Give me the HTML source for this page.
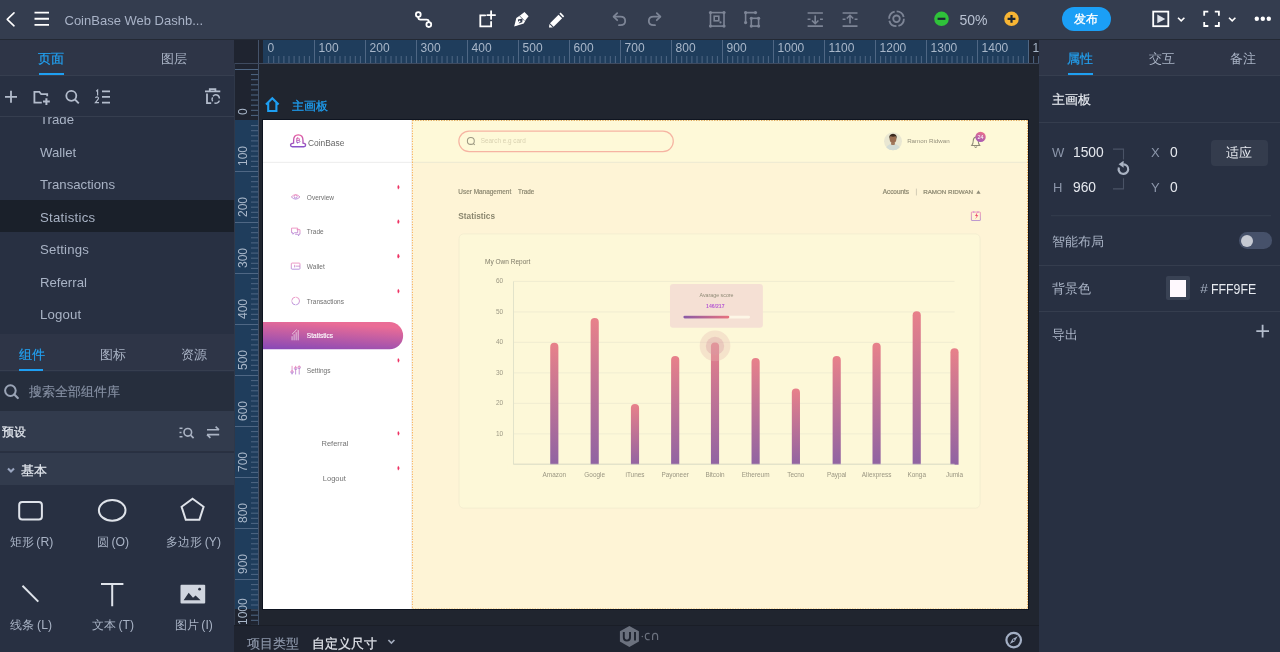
<!DOCTYPE html>
<html><head><meta charset="utf-8">
<style>
*{box-sizing:border-box;margin:0;padding:0}
html,body{width:1280px;height:652px;overflow:hidden;background:#20252f;font-family:"Liberation Sans",sans-serif}
.a{position:absolute}
.t{position:absolute;white-space:nowrap;line-height:1}
svg{position:absolute;overflow:visible}
/* top bar */
#top{left:0;top:0;width:1280px;height:40px;background:#343d4f;border-bottom:1px solid #232934;z-index:2}
/* left panel */
#left{left:0;top:39px;width:234px;height:613px;background:#283042}
#right{left:1039px;top:39px;width:241px;height:613px;background:#283042}
#canvas{left:234px;top:39px;width:805px;height:587px;background:#20252f}
#bottom{left:234px;top:625px;width:805px;height:27px;background:#1f2430;border-top:1px solid #1a1e27}
#wrap{position:absolute;left:0;top:0;width:1280px;height:652px;will-change:transform}
</style></head><body><div id="wrap">
<!-- TOP BAR -->

<div id="top" class="a">
  <!-- back chevron -->
  <svg style="left:0;top:0" width="60" height="39"><path d="M14 12.8 L7.2 19.3 L14 25.8" fill="none" stroke="#fff" stroke-width="1.6" stroke-linecap="round" stroke-linejoin="round"/>
  <path d="M34.5 12.6H49M34.5 18.8H49M34.5 24.9H49" stroke="#fff" stroke-width="1.9"/></svg>
  <div class="t" style="left:64.5px;top:13.5px;font-size:13px;color:#a9b3c7">CoinBase Web Dashb...</div>
  <!-- path icon -->
  <svg style="left:0;top:0" width="1280" height="39">
    <g fill="none" stroke="#fff" stroke-width="1.8" stroke-linecap="round">
      <circle cx="418.3" cy="14.6" r="2.4"/>
      <circle cx="428.8" cy="24.6" r="2.4"/>
      <path d="M418.3 17 V17.5 Q418.3 19.6 420.5 19.6 H426.6 Q428.8 19.6 428.8 21.8 V22.2"/>
      <!-- add frame -->
      <path d="M485.2 15.3 H480.3 V26.4 H491.1 V21.8"/>
      <path d="M491.1 11.2 V18.9 M487.2 15.1 H495.1"/>
    </g>
    <!-- pen nib -->
    <path d="M514.2 26.6 L516.3 18 L520 15.6 L524.5 12 L528.6 16.2 L525.8 19.8 L523.8 23.4 Z" fill="#fff"/>
    <path d="M517.8 19.4 L522.6 18.4 L522.3 22.2 L518.7 23.6 Z" fill="#343d4f"/>
    <path d="M515.2 25.6 L520.2 20.8" stroke="#fff" stroke-width="1.2"/>
    <path d="M519.6 15.9 L524.4 20.7" stroke="#343d4f" stroke-width="0.7"/>
    <!-- pencil -->
    <g transform="translate(549,12)">
      <path d="M11.6 0.6 L15.2 4.2 L14 5.4 L10.4 1.8 Z" fill="#fff"/>
      <path d="M9.5 2.7 L13.1 6.3 L4.6 14.8 L1 11.2 Z" fill="#fff"/>
      <path d="M0.4 12 L3.8 15.4 L0 15.6 Z" fill="#fff"/>
    </g>
    <!-- undo / redo -->
    <g fill="none" stroke="#7d8596" stroke-width="1.8" stroke-linecap="round" stroke-linejoin="round">
      <path d="M617.2 13.2 L613.6 16.7 L617.2 20.2"/>
      <path d="M614 16.7 H620.3 Q625.2 16.7 625.2 21 Q625.2 25.2 620.3 25.2 H619"/>
      <path d="M656.8 13.2 L660.4 16.7 L656.8 20.2"/>
      <path d="M660 16.7 H653.7 Q648.8 16.7 648.8 21 Q648.8 25.2 653.7 25.2 H655"/>
    </g>
    <!-- group -->
    <g fill="none" stroke="#7d8596" stroke-width="1.6">
      <rect x="710.5" y="12.6" width="13.5" height="13.5"/>
      <rect x="714.2" y="16.2" width="4.6" height="4.6"/>
    </g>
    <g fill="#7d8596">
      <circle cx="710.5" cy="12.6" r="1.6"/><circle cx="724" cy="12.6" r="1.6"/><circle cx="710.5" cy="26.1" r="1.6"/><circle cx="724" cy="26.1" r="1.6"/>
      <circle cx="720.5" cy="22.4" r="1.1"/>
    </g>
    <!-- ungroup -->
    <g fill="none" stroke="#7d8596" stroke-width="1.6">
      <path d="M745.6 22.5 V12.6 H755.5"/>
      <rect x="751.3" y="18.3" width="7.3" height="7.8"/>
    </g>
    <g fill="#7d8596">
      <circle cx="745.6" cy="12.6" r="1.6"/><circle cx="755.5" cy="12.6" r="1.6"/><circle cx="745.6" cy="22.6" r="1.6"/>
      <circle cx="751.3" cy="18.3" r="1.6"/><circle cx="758.6" cy="18.3" r="1.6"/><circle cx="751.3" cy="26.1" r="1.6"/><circle cx="758.6" cy="26.1" r="1.6"/>
    </g>
    <!-- align bottom / top -->
    <g fill="none" stroke="#7d8596" stroke-width="1.6">
      <path d="M807.6 13 H822.9 M807.6 26.1 H822.9 M807.6 19.3 H810.5 M820 19.3 H822.9"/>
      <path d="M815.2 15.5 V23.5 M812 20.5 L815.2 23.7 L818.4 20.5"/>
      <path d="M842.6 13 H857.5 M842.6 26.1 H857.5 M842.6 19.3 H845.5 M854.6 19.3 H857.5"/>
      <path d="M850 23.5 V15.5 M846.8 18.5 L850 15.3 L853.2 18.5"/>
    </g>
    <!-- target dashed circle -->
    <g fill="none" stroke="#7d8596" stroke-width="1.8">
      <circle cx="896.5" cy="18.8" r="7.4" stroke-dasharray="9.6 2"/>
      <circle cx="896.5" cy="18.8" r="3.3"/>
    </g>
    <!-- zoom -->
    <circle cx="941.5" cy="18.8" r="7.3" fill="#2fc23a"/>
    <path d="M937.6 18.8 H945.4" stroke="#1c2633" stroke-width="2.2"/>
    <circle cx="1011.5" cy="18.8" r="7.3" fill="#f7b534"/>
    <path d="M1007.6 18.8 H1015.4 M1011.5 14.9 V22.7" stroke="#1c2633" stroke-width="2.2"/>
  </svg>
  <div class="t" style="left:959.5px;top:12.5px;font-size:14px;color:#b9c2d2">50%</div>
  <!-- publish -->
  <div class="a" style="left:1062px;top:7px;width:49px;height:24px;border-radius:12px;background:#1b9ff6"></div>
  <div class="t" style="left:1074.2px;top:13.6px;font-size:11.9px;-webkit-text-stroke:0.3px #fff;color:#fff">发布</div>
  <svg style="left:0;top:0" width="1280" height="39">
    <rect x="1153.2" y="11.6" width="15.1" height="14.6" fill="none" stroke="#fff" stroke-width="1.8"/>
    <path d="M1157.3 14.6 L1165.3 18.9 L1157.3 23.2 Z" fill="#dfe3ea"/>
    <path d="M1178 17.8 L1181.2 20.9 L1184.4 17.8" fill="none" stroke="#fff" stroke-width="1.6"/>
    <path d="M1204.2 15.8 V11.7 H1208.3 M1214.8 11.7 H1218.9 V15.8 M1218.9 21.9 V26 H1214.8 M1208.3 26 H1204.2 V21.9" fill="none" stroke="#fff" stroke-width="1.8"/>
    <path d="M1229 17.8 L1232.2 20.9 L1235.4 17.8" fill="none" stroke="#fff" stroke-width="1.6"/>
    <circle cx="1256.8" cy="18.7" r="2.2" fill="#fff"/><circle cx="1262.8" cy="18.7" r="2.2" fill="#fff"/><circle cx="1268.8" cy="18.7" r="2.2" fill="#fff"/>
  </svg>
</div>

<!-- LEFT PANEL -->

<div id="left" class="a">
  <div class="a" style="left:0;top:0;width:234px;height:37px;background:#2e3547;border-bottom:1px solid #363e4f"></div>
  <div class="t" style="left:38px;top:12.5px;font-size:13px;-webkit-text-stroke:0.2px #22a0f0;color:#22a0f0">页面</div>
  <div class="a" style="left:38.5px;top:34px;width:25px;height:2.2px;background:#1e9ff2"></div>
  <div class="t" style="left:160.5px;top:12.5px;font-size:13px;color:#a9b3c5">图层</div>
  <!-- toolbar -->
  <svg style="left:0;top:0" width="234" height="80">
    <g fill="none" stroke="#b3bccc" stroke-width="1.8">
      <path d="M5 57.8 H17 M11 51.8 V63.8"/>
      <path d="M47.2 57.2 V55.2 H41.2 L39.4 52.9 H34.4 V63.6 H41.8"/>
      <path d="M46.4 59.2 V66 M43 62.6 H49.8" stroke-width="2"/>
      <circle cx="71.3" cy="56.8" r="5"/>
      <path d="M75 60.5 L78.8 64.3"/>
      <path d="M102 52.4 H110 M102 57.9 H110 M102 63.6 H110"/>
      <path d="M205 52.4 H220.3 M209.8 52.2 V50.2 H215.4 V52.2 M207 54.5 V64.2 H211.2"/>
    </g>
    <path d="M96.2 52.2 L97.6 51 V56.4 M95.4 58.8 Q96.4 57.8 97.6 58 Q98.8 58.4 98.4 59.8 L95.4 63.6 H99" fill="none" stroke="#b3bccc" stroke-width="1.2"/>
    <g fill="none" stroke="#b3bccc" stroke-width="1.5">
      <path d="M213 57.2 A3.6 3.6 0 0 1 219.4 59.4"/>
      <path d="M219.3 61.6 A3.6 3.6 0 0 1 214.4 63.9"/>
      <path d="M212.6 62.4 A3.6 3.6 0 0 1 212.6 58.4"/>
    </g>
  </svg>
  <div class="a" style="left:0;top:77px;width:234px;height:1px;background:#363e4f"></div>
  <!-- pages list -->
  <div class="a" style="left:0;top:78px;width:234px;height:216px;overflow:hidden">
    <div class="a" style="left:0;top:83px;width:234px;height:32px;background:#1a202a"></div>
    <div class="t" style="left:40px;top:-3.7px;font-size:13.2px;color:#a9b3c5">Trade</div>
  </div>
  <div class="t" style="left:40px;top:106.8px;font-size:13.2px;color:#a9b3c5">Wallet</div>
  <div class="t" style="left:40px;top:139.3px;font-size:13.2px;color:#a9b3c5">Transactions</div>
  <div class="t" style="left:40px;top:171.8px;font-size:13.2px;letter-spacing:0.27px;color:#a9b3c5">Statistics</div>
  <div class="t" style="left:40px;top:204.3px;font-size:13.2px;letter-spacing:0.16px;color:#a9b3c5">Settings</div>
  <div class="t" style="left:40px;top:236.8px;font-size:13.2px;color:#a9b3c5">Referral</div>
  <div class="t" style="left:40px;top:269.3px;font-size:13.2px;letter-spacing:0.18px;color:#a9b3c5">Logout</div>
  <!-- components tabs -->
  <div class="a" style="left:0;top:295px;width:234px;height:37px;background:#2e3547;border-bottom:1px solid #363e4f"></div>
  <div class="t" style="left:18.5px;top:308.5px;font-size:13px;-webkit-text-stroke:0.2px #22a0f0;color:#22a0f0">组件</div>
  <div class="a" style="left:18.5px;top:329.5px;width:24.5px;height:2.2px;background:#1e9ff2"></div>
  <div class="t" style="left:99.5px;top:308.5px;font-size:13px;color:#a9b3c5">图标</div>
  <div class="t" style="left:180.5px;top:308.5px;font-size:13px;color:#a9b3c5">资源</div>
  <!-- search -->
  <div class="a" style="left:0;top:333px;width:234px;height:39px;background:#262e3d"></div>
  <svg style="left:0;top:0" width="234" height="613">
    <circle cx="10.4" cy="351.6" r="5.3" fill="none" stroke="#9aa4b6" stroke-width="2"/>
    <path d="M14.3 355.5 L17.8 359" stroke="#9aa4b6" stroke-width="2.2" stroke-linecap="round"/>
  </svg>
  <div class="t" style="left:29px;top:346px;font-size:13.2px;-webkit-text-stroke:0.15px #8690a3;color:#8690a3">搜索全部组件库</div>
  <!-- preset row -->
  <div class="a" style="left:0;top:372px;width:234px;height:41px;background:#323b4d;border-bottom:1px solid #2a3141"></div>
  <div class="t" style="left:2.3px;top:387.3px;font-size:12.2px;-webkit-text-stroke:0.25px #e3e7ee;color:#e3e7ee">预设</div>
  <svg style="left:0;top:0" width="234" height="613">
    <g fill="none" stroke="#aab3c3" stroke-width="1.6">
      <path d="M179.5 389.2 H182.5 M179.5 393.5 H181.5 M179.5 397.8 H182.5"/>
      <circle cx="187.8" cy="393.3" r="3.8"/>
      <path d="M190.6 396.1 L193.6 399.1"/>
      <path d="M207 390.8 H219 M215.6 387.6 L219 390.8 M219.2 395.6 H207 M210.4 398.8 L207 395.6"/>
    </g>
  </svg>
  <!-- basic row -->
  <div class="a" style="left:0;top:414px;width:234px;height:32px;background:#323b4d"></div>
  <svg style="left:0;top:0" width="234" height="613">
    <path d="M8 429.6 L11 432.6 L14 429.6" fill="none" stroke="#9aa6c0" stroke-width="2.1"/>
  </svg>
  <div class="t" style="left:20.5px;top:424.5px;font-size:13px;-webkit-text-stroke:0.25px #e3e7ee;color:#e3e7ee">基本</div>
  <!-- grid -->
  <svg style="left:0;top:0" width="234" height="613">
    <g fill="none" stroke="#dfe3ea" stroke-width="2">
      <rect x="19.2" y="463" width="22.7" height="17.5" rx="3"/>
      <ellipse cx="112.2" cy="471.3" rx="13.3" ry="10.4"/>
      <path d="M192.6 459.8 L203.6 467.8 L199.4 480.8 H185.8 L181.6 467.8 Z" stroke-linejoin="miter"/>
      <path d="M22.5 546.8 L38.3 562.6"/>
      <path d="M101 545 H123.4 M112.2 545 V567.2"/>
    </g>
    <rect x="180.5" y="545.7" width="24.7" height="18.7" fill="#d0d5df" rx="1"/>
    <path d="M183.6 561.2 L188.7 553.8 L193 558.8 L195.6 556.4 L200.6 561.2 Z" fill="#2a3141"/>
    <circle cx="199.6" cy="550.2" r="1.4" fill="#2a3141"/>
  </svg>
  <div class="t" style="left:-8.600000000000001px;width:80px;text-align:center;top:497.3px;font-size:12.2px;word-spacing:-0.6px;color:#a9b3c5">矩形 (R)</div>
  <div class="t" style="left:72.85px;width:80px;text-align:center;top:497.3px;font-size:12.2px;word-spacing:-0.6px;color:#a9b3c5">圆 (O)</div>
  <div class="t" style="left:153.5px;width:80px;text-align:center;top:497.3px;font-size:12.2px;word-spacing:-0.6px;color:#a9b3c5">多边形 (Y)</div>
  <div class="t" style="left:-8.850000000000001px;width:80px;text-align:center;top:580.3px;font-size:12.2px;word-spacing:-0.6px;color:#a9b3c5">线条 (L)</div>
  <div class="t" style="left:72.9px;width:80px;text-align:center;top:580.3px;font-size:12.2px;word-spacing:-0.6px;color:#a9b3c5">文本 (T)</div>
  <div class="t" style="left:153.7px;width:80px;text-align:center;top:580.3px;font-size:12.2px;word-spacing:-0.6px;color:#a9b3c5">图片 (I)</div>
</div>
<!-- CANVAS -->
<div id="canvas" class="a"></div>
<svg style="left:0;top:0" width="1280" height="652"><rect x="234" y="39" width="805" height="24" fill="#1f2430"/><rect x="263" y="40" width="765" height="23" fill="#1f3d5c"/><rect x="258" y="39" width="1" height="24" fill="#45536a"/><path d="M268.6 56V63 M273.7 56V63 M278.8 56V63 M283.9 56V63 M289.0 56V63 M294.1 56V63 M299.2 56V63 M304.3 56V63 M309.4 56V63 M314.5 40V63 M319.6 56V63 M324.7 56V63 M329.8 56V63 M334.9 56V63 M340.0 56V63 M345.1 56V63 M350.2 56V63 M355.3 56V63 M360.4 56V63 M365.5 40V63 M370.6 56V63 M375.7 56V63 M380.8 56V63 M385.9 56V63 M391.0 56V63 M396.1 56V63 M401.2 56V63 M406.3 56V63 M411.4 56V63 M416.5 40V63 M421.6 56V63 M426.7 56V63 M431.8 56V63 M436.9 56V63 M442.0 56V63 M447.1 56V63 M452.2 56V63 M457.3 56V63 M462.4 56V63 M467.5 40V63 M472.6 56V63 M477.7 56V63 M482.8 56V63 M487.9 56V63 M493.0 56V63 M498.1 56V63 M503.2 56V63 M508.3 56V63 M513.4 56V63 M518.5 40V63 M523.6 56V63 M528.7 56V63 M533.8 56V63 M538.9 56V63 M544.0 56V63 M549.1 56V63 M554.2 56V63 M559.3 56V63 M564.4 56V63 M569.5 40V63 M574.6 56V63 M579.7 56V63 M584.8 56V63 M589.9 56V63 M595.0 56V63 M600.1 56V63 M605.2 56V63 M610.3 56V63 M615.4 56V63 M620.5 40V63 M625.6 56V63 M630.7 56V63 M635.8 56V63 M640.9 56V63 M646.0 56V63 M651.1 56V63 M656.2 56V63 M661.3 56V63 M666.4 56V63 M671.5 40V63 M676.6 56V63 M681.7 56V63 M686.8 56V63 M691.9 56V63 M697.0 56V63 M702.1 56V63 M707.2 56V63 M712.3 56V63 M717.4 56V63 M722.5 40V63 M727.6 56V63 M732.7 56V63 M737.8 56V63 M742.9 56V63 M748.0 56V63 M753.1 56V63 M758.2 56V63 M763.3 56V63 M768.4 56V63 M773.5 40V63 M778.6 56V63 M783.7 56V63 M788.8 56V63 M793.9 56V63 M799.0 56V63 M804.1 56V63 M809.2 56V63 M814.3 56V63 M819.4 56V63 M824.5 40V63 M829.6 56V63 M834.7 56V63 M839.8 56V63 M844.9 56V63 M850.0 56V63 M855.1 56V63 M860.2 56V63 M865.3 56V63 M870.4 56V63 M875.5 40V63 M880.6 56V63 M885.7 56V63 M890.8 56V63 M895.9 56V63 M901.0 56V63 M906.1 56V63 M911.2 56V63 M916.3 56V63 M921.4 56V63 M926.5 40V63 M931.6 56V63 M936.7 56V63 M941.8 56V63 M946.9 56V63 M952.0 56V63 M957.1 56V63 M962.2 56V63 M967.3 56V63 M972.4 56V63 M977.5 40V63 M982.6 56V63 M987.7 56V63 M992.8 56V63 M997.9 56V63 M1003.0 56V63 M1008.1 56V63 M1013.2 56V63 M1018.3 56V63 M1023.4 56V63 M1028.5 40V63 M1033.6 56V63 M1038.7 56V63" stroke="#4f6784" stroke-width="1"/><g font-family="Liberation Sans" font-size="12" fill="#a9b7c9"><text x="267.6" y="52.3">0</text><text x="318.6" y="52.3">100</text><text x="369.6" y="52.3">200</text><text x="420.6" y="52.3">300</text><text x="471.6" y="52.3">400</text><text x="522.6" y="52.3">500</text><text x="573.6" y="52.3">600</text><text x="624.6" y="52.3">700</text><text x="675.6" y="52.3">800</text><text x="726.6" y="52.3">900</text><text x="777.6" y="52.3">1000</text><text x="828.6" y="52.3">1100</text><text x="879.6" y="52.3">1200</text><text x="930.6" y="52.3">1300</text><text x="981.6" y="52.3">1400</text><text x="1032.6" y="52.3">1500</text></g><rect x="234" y="63" width="24" height="563" fill="#1f2430"/><rect x="234.5" y="120" width="23.5" height="489" fill="#1f3d5c"/><rect x="258" y="63" width="1" height="563" fill="#45536a"/><path d="M234.5 69.5H258 M251 74.6H258 M251 79.7H258 M251 84.8H258 M251 89.9H258 M251 95.0H258 M251 100.1H258 M251 105.2H258 M251 110.3H258 M251 115.4H258 M251 125.6H258 M251 130.7H258 M251 135.8H258 M251 140.9H258 M251 146.0H258 M251 151.1H258 M251 156.2H258 M251 161.3H258 M251 166.4H258 M234.5 171.5H258 M251 176.6H258 M251 181.7H258 M251 186.8H258 M251 191.9H258 M251 197.0H258 M251 202.1H258 M251 207.2H258 M251 212.3H258 M251 217.4H258 M234.5 222.5H258 M251 227.6H258 M251 232.7H258 M251 237.8H258 M251 242.9H258 M251 248.0H258 M251 253.1H258 M251 258.2H258 M251 263.3H258 M251 268.4H258 M234.5 273.5H258 M251 278.6H258 M251 283.7H258 M251 288.8H258 M251 293.9H258 M251 299.0H258 M251 304.1H258 M251 309.2H258 M251 314.3H258 M251 319.4H258 M234.5 324.5H258 M251 329.6H258 M251 334.7H258 M251 339.8H258 M251 344.9H258 M251 350.0H258 M251 355.1H258 M251 360.2H258 M251 365.3H258 M251 370.4H258 M234.5 375.5H258 M251 380.6H258 M251 385.7H258 M251 390.8H258 M251 395.9H258 M251 401.0H258 M251 406.1H258 M251 411.2H258 M251 416.3H258 M251 421.4H258 M234.5 426.5H258 M251 431.6H258 M251 436.7H258 M251 441.8H258 M251 446.9H258 M251 452.0H258 M251 457.1H258 M251 462.2H258 M251 467.3H258 M251 472.4H258 M234.5 477.5H258 M251 482.6H258 M251 487.7H258 M251 492.8H258 M251 497.9H258 M251 503.0H258 M251 508.1H258 M251 513.2H258 M251 518.3H258 M251 523.4H258 M234.5 528.5H258 M251 533.6H258 M251 538.7H258 M251 543.8H258 M251 548.9H258 M251 554.0H258 M251 559.1H258 M251 564.2H258 M251 569.3H258 M251 574.4H258 M234.5 579.5H258 M251 584.6H258 M251 589.7H258 M251 594.8H258 M251 599.9H258 M251 605.0H258 M251 610.1H258 M251 615.2H258 M251 620.3H258 M251 625.4H258 M234.5 630.5H258" stroke="#4f6784" stroke-width="1"/><g font-family="Liberation Sans" font-size="12" fill="#a9b7c9"><text transform="translate(247.2,115.0) rotate(-90)">0</text><text transform="translate(247.2,166.0) rotate(-90)">100</text><text transform="translate(247.2,217.0) rotate(-90)">200</text><text transform="translate(247.2,268.0) rotate(-90)">300</text><text transform="translate(247.2,319.0) rotate(-90)">400</text><text transform="translate(247.2,370.0) rotate(-90)">500</text><text transform="translate(247.2,421.0) rotate(-90)">600</text><text transform="translate(247.2,472.0) rotate(-90)">700</text><text transform="translate(247.2,523.0) rotate(-90)">800</text><text transform="translate(247.2,574.0) rotate(-90)">900</text><text transform="translate(247.2,625.0) rotate(-90)">1000</text></g><rect x="234" y="63" width="805" height="1" fill="#3f4b60"/><rect x="234" y="63" width="1" height="563" fill="#2f3849"/></svg>
<svg style="left:0;top:0" width="1280" height="652">
  <path d="M266 104.5 L272.3 98.2 L278.6 104.5 M268.2 102.6 V111 H276.4 V102.6" fill="none" stroke="#1e9ff2" stroke-width="2.1"/>
</svg>
<div class="t" style="left:292px;top:99.5px;font-size:12px;-webkit-text-stroke:0.3px #1e9ff2;color:#1e9ff2">主画板</div>
<div class="a" style="left:262px;top:119px;width:767px;height:491px;background:#0e1420"></div>
<div id="artboard" class="a" style="left:263px;top:120px;width:765px;height:489px;background:#fff;overflow:hidden">
<div class="a" style="left:0;top:0;width:1500px;height:960px;transform:scale(0.51);transform-origin:0 0">
  <!-- sidebar -->
  <div class="a" style="left:0;top:0;width:293px;height:960px;background:#fff"></div>
  <div class="a" style="left:0;top:82px;width:293px;height:2px;background:#ececec"></div>
  <div class="a" style="left:290.5px;top:0;width:2px;height:960px;background:#ebecef"></div>
  <!-- main -->
  <div class="a" style="left:293px;top:0;width:1207px;height:960px;background:#fef4d6"></div>
  <div class="a" style="left:293px;top:0;width:1207px;height:82px;background:#fef9d8"></div>
  <div class="a" style="left:293px;top:82px;width:1207px;height:2px;background:#ede9d2"></div>
  <svg style="left:0;top:0" width="1500" height="960">
    <defs>
      <linearGradient id="bg" x1="0" y1="0" x2="0" y2="1"><stop offset="0" stop-color="#e8818a"/><stop offset="1" stop-color="#8d62a3"/></linearGradient>
      <linearGradient id="pill" x1="0" y1="1" x2="0.35" y2="0"><stop offset="0" stop-color="#8447b8"/><stop offset="1" stop-color="#ea6c96"/></linearGradient>
      <linearGradient id="ic" x1="0" y1="0" x2="0" y2="1"><stop offset="0" stop-color="#e65aa0"/><stop offset="1" stop-color="#8a52c8"/></linearGradient>
      <linearGradient id="prog" x1="0" y1="0" x2="1" y2="0"><stop offset="0" stop-color="#8a5aa6"/><stop offset="1" stop-color="#e8727e"/></linearGradient>
      <linearGradient id="badge" x1="0.7" y1="0" x2="0.3" y2="1"><stop offset="0" stop-color="#ee6f8a"/><stop offset="1" stop-color="#a05ab8"/></linearGradient>
    </defs>
    <!-- dashed borders -->
    <path d="M293 0V960" stroke="#f9b25a" stroke-width="2" stroke-dasharray="2.5 2.6"/>
    <path d="M293 1H1500" stroke="#e0a858" stroke-width="2" stroke-dasharray="2.5 2.6"/>
    <path d="M1499 0V960" stroke="#e8a858" stroke-width="2" stroke-dasharray="2.5 2.6"/>
    <path d="M293 959H1500" stroke="#f0b868" stroke-width="2" stroke-dasharray="2.5 2.6"/>
    <!-- logo -->
    <path d="M60 45.5 V40 Q60 29 69.2 29 Q78.4 29 78.4 40 V45.5 Q83.6 46 83.6 49.2 Q83.6 52.4 80 52.4 H57.5 Q54 52.4 54 49.2 Q54 46 60 45.5 Z" fill="none" stroke="url(#ic)" stroke-width="2.6" stroke-linejoin="round"/>
    <path d="M66.2 35.5 V44 M66.2 35.8 H69.5 Q71.6 35.8 71.6 38 Q71.6 39.8 69.5 39.8 H66.2 M69.5 39.8 Q72.4 39.8 72.4 42 Q72.4 44 69.8 44 H66.2 M67.6 34 V36 M67.6 44 V46" fill="none" stroke="url(#ic)" stroke-width="1.8"/>
    <!-- pill -->
    <path d="M-10 396 H248 A26.8 26.8 0 0 1 248 449.6 H-10 Z" fill="url(#pill)"/>
    <!-- nav icons -->
    <g fill="none" stroke="url(#ic)" stroke-width="1.5" opacity="0.8">
      <path d="M55.5 150.8 Q64 142 72.5 150.8 Q64 159.5 55.5 150.8 Z"/>
      <circle cx="64" cy="150" r="3"/>
      <path d="M56 212 H68 V221 H62 L58.5 224 V221 H56 Z"/>
      <path d="M66 215 H72.5 V224 H70 V227 L67 224 H63"/>
      <rect x="55.5" y="280.5" width="17" height="12" rx="1.5"/>
      <path d="M62 284 V289 M64 286.5 H72.5"/>
      <circle cx="64" cy="354.9" r="7.6" stroke-dasharray="10.5 1.5"/>
    </g>
    <g fill="none" stroke="#fff" stroke-width="1.5" opacity="0.85">
      <path d="M57 432 V424 M61 432 V420 M65 432 V416 M69 432 V412"/>
      <path d="M57 420 L66 411"/>
    </g>
    <g fill="none" stroke="url(#ic)" stroke-width="1.5" opacity="0.8">
      <path d="M57 482 V499 M64 482 V499 M71 482 V499"/>
      <circle cx="57" cy="494" r="2.5"/><circle cx="64" cy="487" r="2.5"/><circle cx="71" cy="485" r="2.5"/>
    </g>
    <path d="M264.8 126.9 Q270.6 131.6 264.8 136.3 Q262.0 131.6 264.8 126.9Z" fill="#ee3364"/><path d="M264.8 194.7 Q270.6 199.4 264.8 204.1 Q262.0 199.4 264.8 194.7Z" fill="#ee3364"/><path d="M264.8 262.4 Q270.6 267.1 264.8 271.8 Q262.0 267.1 264.8 262.4Z" fill="#ee3364"/><path d="M264.8 331.0 Q270.6 335.7 264.8 340.4 Q262.0 335.7 264.8 331.0Z" fill="#ee3364"/><path d="M264.8 466.7 Q270.6 471.4 264.8 476.1 Q262.0 471.4 264.8 466.7Z" fill="#ee3364"/><path d="M264.8 609.7 Q270.6 614.4 264.8 619.1 Q262.0 614.4 264.8 609.7Z" fill="#ee3364"/><path d="M264.8 677.7 Q270.6 682.4 264.8 687.1 Q262.0 682.4 264.8 677.7Z" fill="#ee3364"/>
    <!-- search -->
    <rect x="384" y="21.6" width="420.5" height="40.6" rx="20.3" fill="none" stroke="#f6b4a2" stroke-width="2.4"/>
    <circle cx="407.5" cy="41" r="6.8" fill="none" stroke="#9c9882" stroke-width="2"/>
    <path d="M412.3 46 L415.2 49" stroke="#9c9882" stroke-width="2"/>
    <!-- avatar -->
    <circle cx="1235.3" cy="41.8" r="17.6" fill="#e9e7d2"/>
    <clipPath id="avc"><circle cx="1235.3" cy="41.8" r="17.6"/></clipPath>
    <g clip-path="url(#avc)">
      <path d="M1220 62 Q1221 47 1235.3 46 Q1249.6 47 1250.6 62 Z" fill="#d3dcd6"/>
      <path d="M1231.5 44 H1239 V48 Q1235.3 50 1231.5 48 Z" fill="#a27a5e"/>
      <ellipse cx="1235.3" cy="37.5" rx="6.4" ry="7.4" fill="#9a6e52"/>
      <path d="M1228 38 Q1226.5 27.5 1235.3 27 Q1244 27.5 1242.6 38 Q1242 32.5 1239.6 32 Q1235.3 33.5 1231 32 Q1228.6 32.5 1228 38 Z" fill="#3a2a1f"/>
    </g>
    <!-- bell -->
    <path d="M1389.6 50 H1405.4 Q1402.4 46.4 1402.4 41.2 Q1402.4 34.4 1397.5 33.2 Q1392.6 34.4 1392.6 41.2 Q1392.6 46.4 1389.6 50 Z M1395 52 Q1397.5 55.5 1400 52" fill="none" stroke="#8e8a76" stroke-width="2"/>
    <circle cx="1407" cy="33.1" r="10.2" fill="url(#badge)"/>
    <text x="1407" y="37" text-anchor="middle" font-family="Liberation Sans" font-size="10.5" fill="#fff">24</text>
    <!-- header right -->
    <path d="M1281.2 134.5 V148" stroke="#c9c4ae" stroke-width="1.6"/>
    <path d="M1398.6 144.8 L1402.8 137.8 L1407 144.8 Z" fill="#8e8a76"/>
    <!-- calendar -->
    <g fill="none" stroke="url(#ic)" stroke-width="1.5" opacity="0.75">
      <rect x="1389" y="180.5" width="17.6" height="16.6" rx="1"/>
      <path d="M1389 185.6 H1406.6"/>
    </g>
    <circle cx="1393.6" cy="180.6" r="1.6" fill="#d890d8"/><circle cx="1402" cy="180.6" r="1.6" fill="#d890d8"/>
    <path d="M1400.8 180.8 L1396.2 188.4 H1399.6 L1396.4 194.8 L1402.6 186.6 H1399.2 Z" fill="#ee3a64"/>
    <!-- card -->
    <rect x="384.5" y="223.3" width="1021.5" height="537.8" rx="9" fill="#fdf8d8" stroke="#f2ebcf" stroke-width="1.6"/>
    <!-- grid -->
    <path d="M491.2 316.5H1356 M491.2 376.3H1356 M491.2 436.0H1356 M491.2 495.8H1356 M491.2 555.6H1356 M491.2 615.4H1356 M491.2 675.1H1356" stroke="#ede9cf" stroke-width="1.6"/>
    <path d="M491.2 316.5 V675.1 H1356" fill="none" stroke="#dfe0c8" stroke-width="1.8"/>
    <g font-family="Liberation Sans" font-size="12.8" fill="#9d9985" text-anchor="end"><text x="471" y="320.5">60</text><text x="471" y="380.3">50</text><text x="471" y="440.0">40</text><text x="471" y="499.8">30</text><text x="471" y="559.6">20</text><text x="471" y="619.4">10</text></g>
    <rect x="563.2" y="436.9" width="16" height="246.2" rx="8" fill="url(#bg)"/><rect x="642.4" y="388.2" width="16" height="294.9" rx="8" fill="url(#bg)"/><rect x="721.4" y="556.9" width="16" height="126.2" rx="8" fill="url(#bg)"/><rect x="800.2" y="462.5" width="16" height="220.6" rx="8" fill="url(#bg)"/><rect x="878.3" y="436.3" width="16" height="246.8" rx="8" fill="url(#bg)"/><rect x="957.9" y="466.5" width="16" height="216.6" rx="8" fill="url(#bg)"/><rect x="1036.9" y="526.5" width="16" height="156.6" rx="8" fill="url(#bg)"/><rect x="1116.9" y="462.5" width="16" height="220.6" rx="8" fill="url(#bg)"/><rect x="1195.1" y="436.7" width="16" height="246.4" rx="8" fill="url(#bg)"/><rect x="1273.8" y="375.0" width="16" height="308.1" rx="8" fill="url(#bg)"/><rect x="1347.9" y="447.6" width="16" height="235.5" rx="8" fill="url(#bg)"/>
    <rect x="480" y="675.9" width="900" height="12" fill="#fdf8d8"/>
    <path d="M491.2 675.1 H1356" stroke="#dfe0c8" stroke-width="1.8"/>
    <g font-family="Liberation Sans" font-size="12.6" fill="#9a9682" text-anchor="middle"><text x="571.2" y="700.3">Amazon</text><text x="650.4" y="700.3">Google</text><text x="729.4" y="700.3">iTunes</text><text x="808.2" y="700.3">Payoneer</text><text x="886.3" y="700.3">Bitcoin</text><text x="965.9" y="700.3">Ethereum</text><text x="1044.9" y="700.3">Tecno</text><text x="1124.9" y="700.3">Paypal</text><text x="1203.1" y="700.3">Aliexpress</text><text x="1281.8" y="700.3">Konga</text><text x="1355.9" y="700.3">Jumia</text></g>
    <!-- tooltip -->
    <rect x="798" y="321.6" width="182.2" height="85.7" rx="6" fill="#f5e0d4"/>
    <text x="889.3" y="347" text-anchor="middle" font-family="Liberation Sans" font-size="10.4" fill="#8f8a76">Avarage score</text>
    <text x="886.8" y="368.5" text-anchor="middle" font-family="Liberation Sans" font-size="10" font-weight="bold" fill="#b75ad2">146/217</text>
    <rect x="824.3" y="384" width="130.6" height="5" rx="2.5" fill="#fdf6e6"/>
    <rect x="824.3" y="384" width="90" height="5" rx="2.5" fill="url(#prog)"/>
    <circle cx="886.3" cy="442.9" r="30" fill="#e5b7b0" fill-opacity="0.32"/>
    <circle cx="886.3" cy="442.9" r="18" fill="#d69aa2" fill-opacity="0.35"/>
  </svg>
  <div class="t" style="left:88px;top:36.5px;font-size:16.5px;color:#666666">CoinBase</div>
  <div class="t" style="left:86px;top:146.2px;font-size:12.8px;color:#6f6f6f">Overview</div><div class="t" style="left:86px;top:214.0px;font-size:12.8px;color:#6f6f6f">Trade</div><div class="t" style="left:86px;top:281.7px;font-size:12.8px;color:#6f6f6f">Wallet</div><div class="t" style="left:86px;top:350.3px;font-size:12.8px;color:#6f6f6f">Transactions</div><div class="t" style="left:86px;top:418px;font-size:12.8px;-webkit-text-stroke:0.25px #fff;color:#fff">Statistics</div><div class="t" style="left:86px;top:486.0px;font-size:12.8px;color:#6f6f6f">Settings</div>
  <div class="t" style="left:75.9px;width:130px;text-align:center;top:627.7px;font-size:14.8px;color:#737373">Referral</div>
  <div class="t" style="left:74.8px;width:130px;text-align:center;top:696.2px;font-size:14.8px;color:#737373">Logout</div>
  <div class="t" style="left:427px;top:34.5px;font-size:12.5px;color:#d9d2b2">Search e.g card</div>
  <div class="t" style="left:1263px;top:35px;font-size:12.2px;color:#96927e">Ramon Ridwan</div>
  <div class="t" style="left:383px;top:136px;font-size:12.6px;color:#8b8770;-webkit-text-stroke:0.35px #8b8770">User Management</div>
  <div class="t" style="left:500px;top:136px;font-size:12.4px;color:#8b8770;-webkit-text-stroke:0.35px #8b8770">Trade</div>
  <div class="t" style="left:383px;top:180.3px;font-size:16.2px;font-weight:bold;color:#8a866f">Statistics</div>
  <div class="t" style="left:1215px;top:135.4px;font-size:12.6px;color:#8b8770;-webkit-text-stroke:0.4px #8b8770">Accounts</div>
  <div class="t" style="left:1294.5px;top:135.4px;font-size:12.2px;color:#8b8770;-webkit-text-stroke:0.4px #8b8770">RAMON RIDWAN</div>
  <div class="t" style="left:435.3px;top:272.5px;font-size:12.8px;color:#7f7b68">My Own Report</div>
</div>
</div>
<div id="bottom" class="a"></div>
<div class="t" style="left:246.8px;top:636.6px;font-size:13px;-webkit-text-stroke:0.15px #8e98ab;color:#8e98ab">项目类型</div>
<div class="t" style="left:312.2px;top:636.6px;font-size:13px;-webkit-text-stroke:0.2px #e6e9ef;color:#e6e9ef">自定义尺寸</div>
<svg style="left:0;top:0" width="1280" height="652">
  <path d="M388.4 640 L391.4 643 L394.4 640" fill="none" stroke="#a3acbd" stroke-width="1.7"/>
  <!-- ui.cn logo -->
  <path d="M629.4 626 L638.9 631.3 V641.6 L629.4 646.9 L619.9 641.6 V631.3 Z" fill="#6b717e"/>
  <path d="M623.8 632 V637.5 Q623.8 640.6 626.9 640.6 Q630 640.6 630 637.5 V632" fill="none" stroke="#1f2430" stroke-width="1.9"/>
  <path d="M635 632 V640.5" stroke="#1f2430" stroke-width="1.9"/>
  <circle cx="642.3" cy="636.5" r="0.7" fill="#6b717e"/>
  <path d="M649.6 633.6 Q645.3 632.6 645.3 636.6 Q645.3 640.5 649.6 639.6" fill="none" stroke="#6b717e" stroke-width="1.2"/>
  <path d="M652.6 640 V636.3 Q652.6 633.4 655.2 633.4 Q657.6 633.4 657.6 636.3 V640" fill="none" stroke="#6b717e" stroke-width="1.2"/>
  <!-- compass -->
  <circle cx="1013.7" cy="640.1" r="7.3" fill="none" stroke="#a3afc4" stroke-width="2.2"/>
  <path d="M1017.66 636.14 L1014.9 641.3 L1009.74 644.06 L1012.5 638.9 Z" fill="#a3afc4"/>
  <circle cx="1013.7" cy="640.1" r="0.9" fill="#1f2430"/>
</svg>
<!-- RIGHT PANEL -->
<div id="right" class="a">
  <div class="a" style="left:0;top:0;width:241px;height:37px;background:#2e3547;border-bottom:1px solid #363e4f"></div>
  <div class="t" style="left:28px;top:13px;font-size:13px;-webkit-text-stroke:0.2px #22a0f0;color:#22a0f0">属性</div>
  <div class="a" style="left:29px;top:34px;width:24.5px;height:2.2px;background:#1e9ff2"></div>
  <div class="t" style="left:109.5px;top:13px;font-size:13px;color:#a9b3c5">交互</div>
  <div class="t" style="left:191px;top:13px;font-size:13px;color:#a9b3c5">备注</div>
  <div class="t" style="left:13px;top:53.6px;font-size:13px;-webkit-text-stroke:0.2px #e6e9ef;color:#e6e9ef">主画板</div>
  <div class="a" style="left:0;top:83px;width:241px;height:1px;background:#353d4e"></div>
  <div class="t" style="left:13px;top:106.5px;font-size:13px;color:#8c96aa">W</div>
  <div class="t" style="left:34px;top:106.5px;font-size:13.8px;color:#e6e9ef">1500</div>
  <div class="t" style="left:14px;top:141.5px;font-size:13px;color:#8c96aa">H</div>
  <div class="t" style="left:34px;top:141.5px;font-size:13.8px;color:#e6e9ef">960</div>
  <div class="t" style="left:112px;top:106.5px;font-size:13px;color:#8c96aa">X</div>
  <div class="t" style="left:131px;top:106.5px;font-size:13.8px;color:#e6e9ef">0</div>
  <div class="t" style="left:112px;top:141.5px;font-size:13px;color:#8c96aa">Y</div>
  <div class="t" style="left:131px;top:141.5px;font-size:13.8px;color:#e6e9ef">0</div>
  <div class="a" style="left:171.5px;top:100.5px;width:57px;height:26.5px;border-radius:4px;background:#343c4d"></div>
  <div class="t" style="left:186.5px;top:107px;font-size:13px;color:#e6e9ef">适应</div>
  <svg style="left:0;top:0" width="241" height="613">
    <path d="M74 110.1 H84.5 V120.4 M84.5 139.3 V149.9 H74" fill="none" stroke="#4a5366" stroke-width="1.1"/>
    <path d="M84.4 125.3 A4.8 4.8 0 1 1 79.9 128.5" fill="none" stroke="#aab3c3" stroke-width="2.2"/>
    <path d="M79.6 125.3 L84.6 121.8 L84.6 128.8 Z" fill="#aab3c3"/>
    <rect x="12" y="176.2" width="220" height="1" fill="#353d4e"/>
  </svg>
  <div class="t" style="left:13px;top:195.5px;font-size:13px;color:#a9b3c5">智能布局</div>
  <div class="a" style="left:200px;top:193.2px;width:33px;height:16.5px;border-radius:8.25px;background:#46516a"></div>
  <div class="a" style="left:202.1px;top:195.7px;width:12px;height:12px;border-radius:6px;background:#c6cad3"></div>
  <div class="a" style="left:0;top:226px;width:241px;height:1px;background:#353d4e"></div>
  <div class="t" style="left:13px;top:242.7px;font-size:13px;color:#a9b3c5">背景色</div>
  <div class="a" style="left:127px;top:237.3px;width:24px;height:23.5px;border-radius:2px;background:#394254"></div>
  <div class="a" style="left:131px;top:240.8px;width:16px;height:17px;background:#fff9fe"></div>
  <div class="t" style="left:161.3px;top:243.3px;font-size:13.6px;color:#a3adbf">#</div>
  <div class="t" style="left:172.4px;top:243.3px;font-size:14.2px;transform:scaleX(0.87);transform-origin:0 0;color:#e6e9ef">FFF9FE</div>
  <div class="a" style="left:0;top:272px;width:241px;height:1px;background:#353d4e"></div>
  <div class="t" style="left:13px;top:288.7px;font-size:13px;color:#a9b3c5">导出</div>
  <svg style="left:0;top:0" width="241" height="613">
    <path d="M217.3 292.1 H230 M223.6 285.8 V298.4" stroke="#b3bccc" stroke-width="1.8"/>
  </svg>
</div>
</div></body></html>
